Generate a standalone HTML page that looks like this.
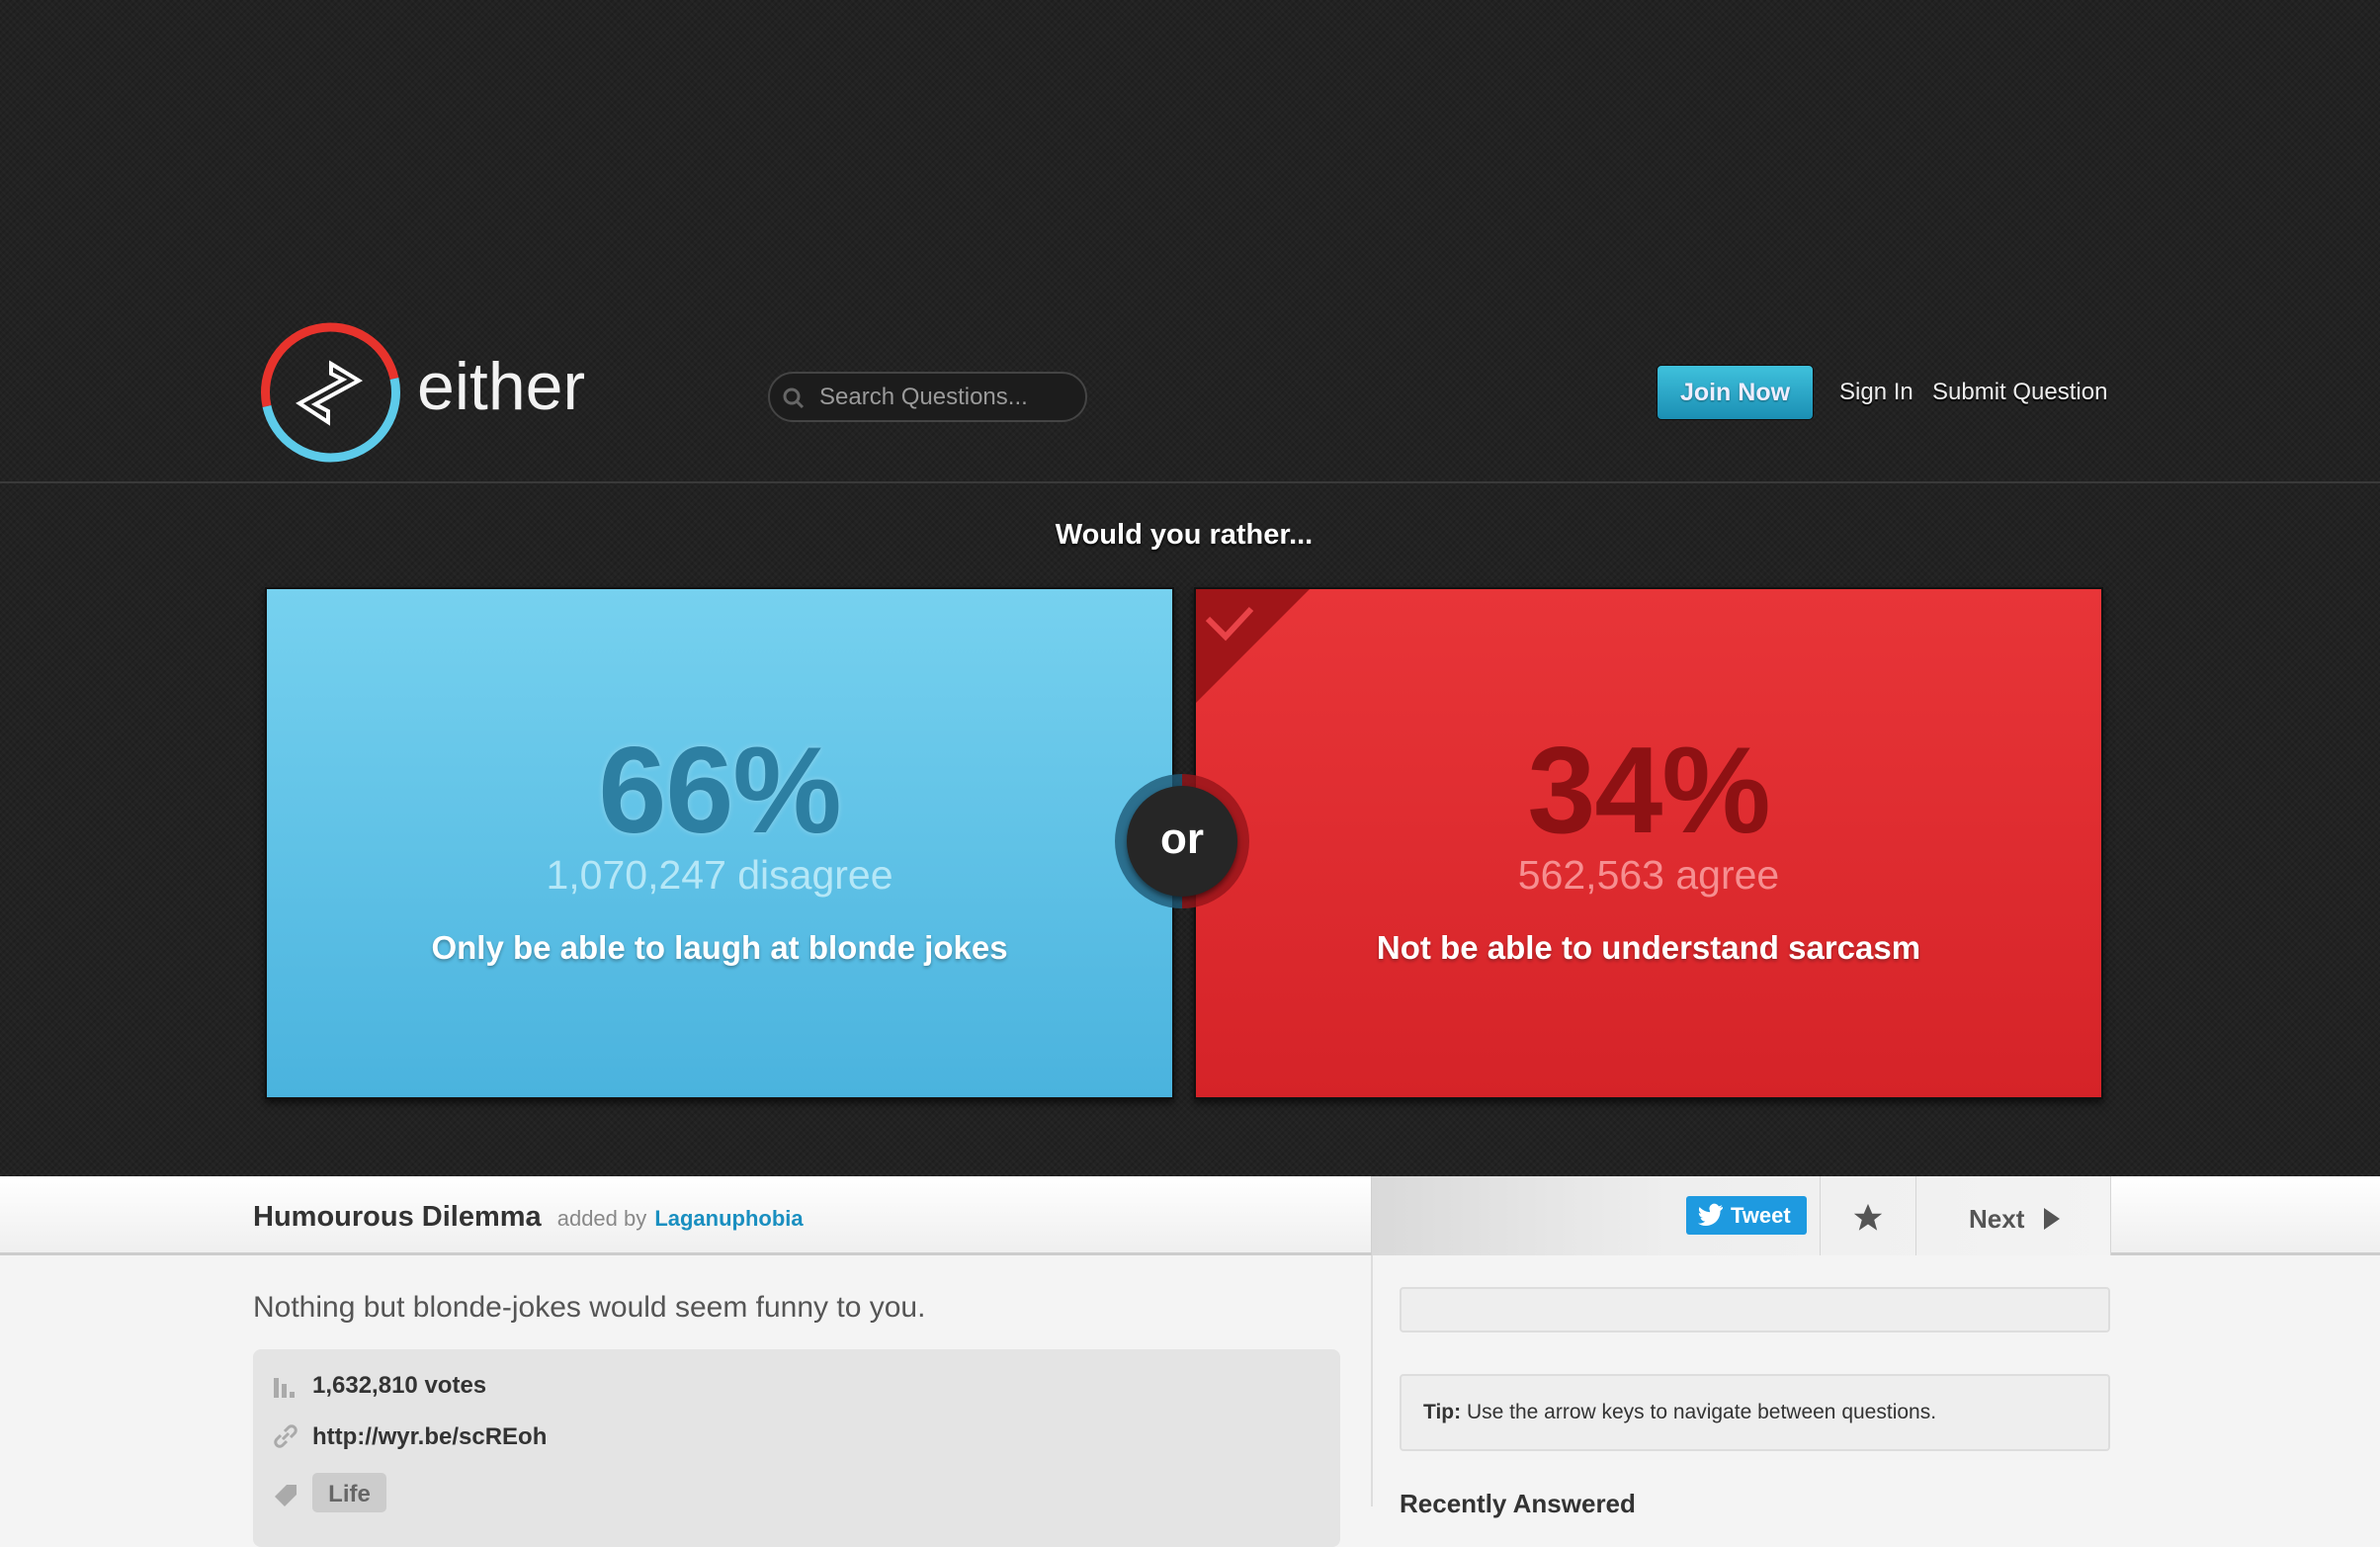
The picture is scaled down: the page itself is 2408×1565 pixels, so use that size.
<!DOCTYPE html>
<html><head><meta charset="utf-8">
<style>
*{margin:0;padding:0;box-sizing:border-box}
body{width:2408px;height:1524px;overflow:hidden;font-family:"Liberation Sans",Arial,sans-serif;background:#f4f4f4;position:relative}
.dark{position:absolute;left:0;top:0;width:2408px;height:1190px;background:#222;
background-image:repeating-linear-gradient(45deg,rgba(255,255,255,.018) 0 2px,transparent 2px 5px),repeating-linear-gradient(-45deg,rgba(0,0,0,.12) 0 2px,transparent 2px 5px)}
.hline{position:absolute;left:0;top:487px;width:2408px;height:2px;background:#3a3a3a}
.abs{position:absolute}
.either{left:422px;top:352px;font-size:68px;color:#f2f2f2;letter-spacing:0px}
.search{left:777px;top:376px;width:323px;height:51px;border:2px solid #444;border-radius:26px;background:#1c1c1c;color:#9a9a9a;font-size:24px;line-height:47px;padding-left:50px}
.join{left:1676px;top:369px;width:159px;height:56px;border-radius:5px;background:linear-gradient(#3fc1dc,#1b8fb4);border:1px solid #0d0d0d;color:#eef;font-weight:bold;font-size:25px;text-align:center;line-height:54px;text-shadow:0 1px 2px rgba(0,0,0,.4)}
.nav{top:383px;color:#eee;font-size:24px;text-shadow:0 2px 1px #000}
.wyr{left:0;width:2408px;top:525px;text-align:center;color:#fff;font-weight:bold;font-size:29px;text-shadow:0 2px 2px #000;padding-right:12px}
.box{top:594px;width:920px;height:518px;box-shadow:0 4px 8px rgba(0,0,0,.6);border:2px solid #111;overflow:hidden}
.blue{left:268px;background:linear-gradient(180deg,#76d1ef,#4ab3de)}
.red{left:1208px;background:linear-gradient(180deg,#e83538,#d52328)}
.wrap{text-align:center}
.pct{position:absolute;left:0;width:100%;top:738px;font-weight:bold;font-size:124px;line-height:1;letter-spacing:-1px}
.cnt{position:absolute;left:0;width:100%;font-size:41px;top:862px}
.opt{position:absolute;left:0;width:100%;font-size:33px;font-weight:bold;color:#fff;top:940px;text-shadow:0 2px 3px rgba(0,0,0,.3)}
.bar{left:0;top:1190px;width:2408px;height:80px;background:linear-gradient(#fff,#efefef);border-bottom:3px solid #ccc}
.rbar{left:1387px;top:1190px;width:749px;height:80px;background:linear-gradient(90deg,#d9d9d9,#eee 40%,#f3f3f3);border-left:1px solid #d0d0d0}
</style></head><body>
<div class="dark"></div>
<div class="hline"></div>
<svg class="abs" style="left:262px;top:323px" width="146" height="146" viewBox="0 0 146 146">
<path d="M8 88 A66 66 0 0 1 137 60" fill="none" stroke="#e8332c" stroke-width="9"/>
<path d="M137 60 A66 66 0 0 1 8 88" fill="none" stroke="#5dcbea" stroke-width="9"/>
<path d="M73 45 L101 62 L57 86 L70 93 L70 104 L41 85 L85 61 L73 55 Z" fill="none" stroke="#fff" stroke-width="4" stroke-linejoin="miter"/>
</svg>
<div class="abs either">either</div>
<div class="abs search">Search Questions...</div>
<svg class="abs" style="left:791px;top:391px" width="24" height="24"><circle cx="10" cy="10" r="7" fill="none" stroke="#666" stroke-width="3"/><path d="M15 15 L21 21" stroke="#666" stroke-width="3"/></svg>
<div class="abs join">Join Now</div>
<div class="abs nav" style="left:1861px">Sign In</div>
<div class="abs nav" style="left:1955px">Submit Question</div>
<div class="abs wyr">Would you rather...</div>
<div class="abs box blue"></div>
<div class="abs box red"></div>
<svg class="abs" style="left:1210px;top:596px" width="115" height="115"><path d="M0 0 H115 L0 115Z" fill="#a01518"/><path d="M12 30 L30 48 L56 20" fill="none" stroke="#e94348" stroke-width="6"/></svg>
<div class="abs wrap" style="left:268px;width:920px;top:0">
<div class="pct" style="color:#2d7fa2;text-shadow:0 0 6px rgba(255,255,255,.3)">66%</div>
<div class="cnt" style="color:#b5e7f7">1,070,247 disagree</div>
<div class="opt">Only be able to laugh at blonde jokes</div></div>
<div class="abs wrap" style="left:1208px;width:920px;top:0">
<div class="pct" style="color:#8e1113">34%</div>
<div class="cnt" style="color:#f68e90">562,563 agree</div>
<div class="opt">Not be able to understand sarcasm</div></div>
<div class="abs" style="left:1128px;top:783px;width:136px;height:136px;border-radius:50%;background:linear-gradient(90deg,rgba(30,90,120,.8) 50%,rgba(150,20,25,.8) 50%)"></div>
<div class="abs" style="left:1140px;top:795px;width:112px;height:112px;border-radius:50%;background:#262626;color:#fff;font-weight:bold;font-size:44px;text-align:center;line-height:108px;box-shadow:0 3px 6px rgba(0,0,0,.5)">or</div>
<div class="abs bar"></div>
<div class="abs rbar"></div>
<div class="abs" style="left:1387px;top:1270px;width:2px;height:254px;background:#ddd"></div>
<div class="abs" style="left:256px;top:1215px;font-size:29px;font-weight:bold;color:#333">Humourous Dilemma <span style="font-size:22px;font-weight:normal;color:#888;margin-left:8px">added by</span> <span style="font-size:22px;color:#1a8fc0;font-weight:bold">Laganuphobia</span></div>
<div class="abs" style="left:1706px;top:1210px;width:122px;height:39px;background:#1e9ae0;border-radius:3px;color:#fff;font-weight:bold;font-size:22px;line-height:39px;padding-left:45px">Tweet</div>
<svg class="abs" style="left:1718px;top:1217px" width="26" height="24"><path d="M25 4c-1 .4-2 .6-3 .8 1-.6 2-1.6 2.3-2.7-1 .6-2 1-3.3 1.3A5 5 0 0 0 12 8c0 .4 0 .8.1 1.2C7.8 9 4 7 1.6 4c-1.4 2.4-.5 5 1.5 6.6-.8 0-1.6-.2-2.3-.6 0 2.5 1.8 4.5 4 5-.7.2-1.5.2-2.2.1.6 2 2.5 3.4 4.7 3.5A10 10 0 0 1 0 20.6 14.5 14.5 0 0 0 22.5 8c1-.7 1.8-1.6 2.5-2.6z" fill="#fff"/></svg>
<div class="abs" style="left:1841px;top:1190px;width:1px;height:80px;background:#d6d6d6"></div>
<div class="abs" style="left:1938px;top:1190px;width:1px;height:80px;background:#d6d6d6"></div>
<div class="abs" style="left:2135px;top:1190px;width:1px;height:80px;background:#d6d6d6"></div>
<svg class="abs" style="left:1873px;top:1215px" width="34" height="34" viewBox="0 0 24 24"><path d="M12 2l3 7h7l-5.6 4.4 2.1 7.6L12 16.6 5.5 21l2.1-7.6L2 9h7z" fill="#555"/></svg>
<div class="abs" style="left:1992px;top:1218px;font-size:26px;font-weight:bold;color:#555">Next</div>
<svg class="abs" style="left:2066px;top:1221px" width="20" height="24"><path d="M2 1 L18 12 L2 23Z" fill="#555"/></svg>
<div class="abs" style="left:256px;top:1306px;font-size:30px;color:#555">Nothing but blonde-jokes would seem funny to you.</div>
<div class="abs" style="left:256px;top:1365px;width:1100px;height:200px;background:#e4e4e4;border-radius:8px"></div>
<svg class="abs" style="left:276px;top:1388px" width="24" height="26"><rect x="1" y="6" width="5" height="20" fill="#aaa"/><rect x="9" y="12" width="5" height="14" fill="#aaa"/><rect x="17" y="20" width="5" height="6" fill="#aaa"/></svg>
<div class="abs" style="left:316px;top:1388px;font-size:24px;font-weight:bold;color:#333">1,632,810 votes</div>
<svg class="abs" style="left:276px;top:1440px" width="26" height="26"><path d="M10 16 L16 10 M8 12 L4 16 a4 4 0 0 0 6 6 L14 18 M12 8 L16 4 a4 4 0 0 1 6 6 L18 14" fill="none" stroke="#aaa" stroke-width="3"/></svg>
<div class="abs" style="left:316px;top:1440px;font-size:24px;font-weight:bold;color:#333">http://wyr.be/scREoh</div>
<svg class="abs" style="left:276px;top:1500px" width="26" height="26"><path d="M2 14 L14 2 H24 V12 L12 24Z" fill="#aaa"/></svg>
<div class="abs" style="left:316px;top:1490px;width:75px;height:40px;background:#ccc;border-radius:5px;font-size:24px;font-weight:bold;color:#666;text-align:center;line-height:44px">Life</div>
<div class="abs" style="left:1416px;top:1302px;width:719px;height:46px;background:#eee;border:2px solid #ddd;border-radius:4px"></div>
<div class="abs" style="left:1416px;top:1390px;width:719px;height:78px;background:#eee;border:2px solid #ddd;border-radius:4px;font-size:21px;color:#333;line-height:74px;padding-left:22px"><b>Tip:</b> Use the arrow keys to navigate between questions.</div>
<div class="abs" style="left:1416px;top:1506px;font-size:26px;font-weight:bold;color:#333">Recently Answered</div>
</body></html>
